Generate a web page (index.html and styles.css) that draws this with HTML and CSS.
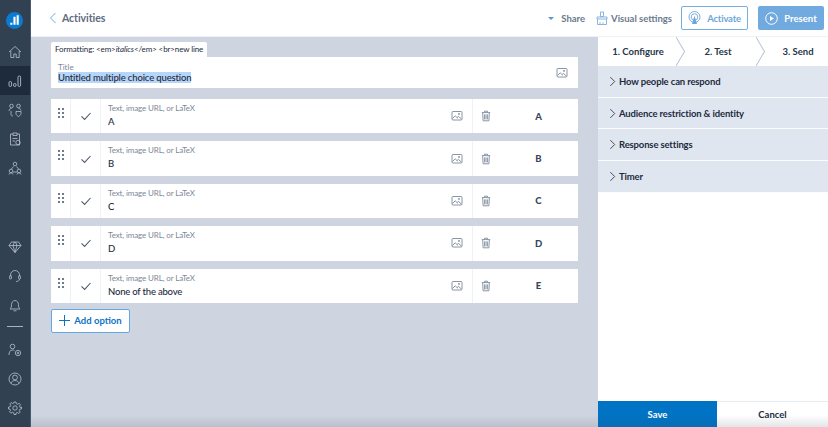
FILE: index.html
```html
<!DOCTYPE html>
<html lang="en">
<head>
<meta charset="utf-8">
<title>Activities</title>
<link rel="stylesheet" href="styles.css">
</head>
<body>
<svg class="defs" width="0" height="0" aria-hidden="true">
  <symbol id="i-image" viewBox="0 0 12 12"><rect x="1" y="1.5" width="10" height="8.5" rx="1" fill="none" stroke="currentColor" stroke-width=".9"/><path d="M1.5 8.5 4.2 5.8 6.6 8.2M6 7.6l1.4-1.2 3 2.6" fill="none" stroke="currentColor" stroke-width=".9"/><circle cx="8" cy="3.9" r=".9" fill="currentColor"/></symbol>
  <symbol id="i-trash" viewBox="0 0 12 12"><path d="M1.8 2.6h8.4M4.5 2.4V1.2h3v1.2M2.7 2.8l.4 8h5.8l.4-8M4.6 4.4v5M6 4.4v5M7.4 4.4v5" fill="none" stroke="currentColor" stroke-width=".9"/></symbol>
  <symbol id="i-check" viewBox="0 0 12 12"><path d="M1.5 6.4 4.6 9.4 10.5 3" fill="none" stroke="currentColor" stroke-width="1.1"/></symbol>
  <symbol id="i-drag" viewBox="0 0 8 12"><g fill="currentColor"><rect x="1" y="1" width="2" height="2"/><rect x="5" y="1" width="2" height="2"/><rect x="1" y="5" width="2" height="2"/><rect x="5" y="5" width="2" height="2"/><rect x="1" y="9" width="2" height="2"/><rect x="5" y="9" width="2" height="2"/></g></symbol>
  <symbol id="i-chev" viewBox="0 0 8 12"><path d="M1.5 1 6.5 6 1.5 11" fill="none" stroke="currentColor" stroke-width="1"/></symbol>
</svg>
<div class="app">
  <nav class="rail">
    <div class="rail-logo">
      <svg width="17" height="17" viewBox="0 0 16 16"><circle cx="8" cy="8" r="8" fill="#0a7bd0"/><path d="M4 10h2v2H4zM7 4.500h2V12H7zM10 3h2v9h-2z" fill="#fff"/></svg>
    </div>
    <a class="rail-item"><svg width="14" height="14" viewBox="0 0 14 14"><path d="M1 7 7 1.500 13 7M2.800 6v6.500h3V9h2.400v3.500h3V6" fill="none" stroke="currentColor" stroke-width=".8"/></svg></a>
    <a class="rail-item active"><svg width="14" height="14" viewBox="0 0 14 14"><g fill="none" stroke="currentColor" stroke-width=".9"><rect x="1" y="7.500" width="2.600" height="5" rx="1.300"/><rect x="5.500" y="9.500" width="2.600" height="3" rx="1.300"/><rect x="10" y="2" width="2.600" height="10.500" rx="1.300"/></g></svg></a>
    <a class="rail-item"><svg width="14" height="14" viewBox="0 0 14 14"><g fill="none" stroke="currentColor" stroke-width=".8"><circle cx="3.500" cy="3" r="1.800"/><circle cx="10.500" cy="3" r="1.800"/><path d="M1 8c0-1.500 1-2.500 2.500-2.500M13 7.500c0-1-1-2-2.500-2M3 8v3.500c0 1 1 1.500 2 1.500M8 8.500h5v2c0 1.500-1.500 2.500-2.500 3-1-.5-2.500-1.500-2.500-3z"/></g></svg></a>
    <a class="rail-item"><svg width="14" height="14" viewBox="0 0 14 14"><g fill="none" stroke="currentColor" stroke-width=".8"><path d="M5 2H2.500v11h9V2H9M5 1h4v2.500H5zM4.500 6.500h5M4.500 9h2.500"/><circle cx="10" cy="10.500" r="2.200"/></g></svg></a>
    <a class="rail-item"><svg width="14" height="14" viewBox="0 0 14 14"><g fill="none" stroke="currentColor" stroke-width=".8"><circle cx="7" cy="3" r="1.800"/><circle cx="3" cy="10" r="1.800"/><circle cx="11" cy="10" r="1.800"/><path d="M5.500 5.500 3.500 8M8.500 5.500l2 2.500M5 11h4M1 13.500c0-1 1-1.500 2-1.500s2 .5 2 1.500M9 13.500c0-1 1-1.500 2-1.500s2 .5 2 1.500"/></g></svg></a>
    <div class="rail-space"></div>
    <a class="rail-item"><svg width="14" height="14" viewBox="0 0 14 14"><path d="M3.500 2h7L13 5.500 7 12.500 1 5.500zM1 5.500h12M5 5.500 7 12.500 9 5.500 7.500 2M5 5.500 6.500 2" fill="none" stroke="currentColor" stroke-width=".8"/></svg></a>
    <a class="rail-item"><svg width="14" height="14" viewBox="0 0 14 14"><g fill="none" stroke="currentColor" stroke-width=".8"><path d="M2.500 7.500V6a4.500 4.500 0 0 1 9 0v1.500M11.500 10c0 1.500-1.500 2.500-3.500 2.500"/><rect x="1.500" y="6.500" width="2" height="3.500" rx="1"/><rect x="10.500" y="6.500" width="2" height="3.500" rx="1"/></g></svg></a>
    <a class="rail-item"><svg width="14" height="14" viewBox="0 0 14 14"><path d="M2 11h10c-1.200-1-1.500-2-1.500-4.500 0-2-1.500-4-3.500-4s-3.500 2-3.500 4C3.500 9 3.200 10 2 11zM5.500 12.800h3" fill="none" stroke="currentColor" stroke-width=".8"/></svg></a>
    <div class="rail-rule"></div>
    <a class="rail-item"><svg width="14" height="14" viewBox="0 0 14 14"><g fill="none" stroke="currentColor" stroke-width=".8"><circle cx="4.500" cy="3.500" r="2.300"/><path d="M1 12c0-3 1-5 3.500-5 1 0 1.500.2 2 .6"/><circle cx="10" cy="10" r="2.700"/><path d="M8.700 10h2.600M10 8.700v2.600"/></g></svg></a>
    <a class="rail-item"><svg width="14" height="14" viewBox="0 0 14 14"><g fill="none" stroke="currentColor" stroke-width=".8"><circle cx="7" cy="7" r="6"/><circle cx="7" cy="5.500" r="2.400"/><path d="M3 11.500c.5-2 2-3 4-3s3.500 1 4 3"/></g></svg></a>
    <a class="rail-item"><svg width="14" height="14" viewBox="0 0 14 14"><g fill="none" stroke="currentColor" stroke-width=".8"><circle cx="7" cy="7" r="2.200"/><path d="M6 1h2l.3 1.700 1.400.6 1.400-1 1.400 1.400-1 1.400.6 1.400L13.500 6v2l-1.700.3-.6 1.400 1 1.400-1.400 1.400-1.400-1-1.400.6L8 13.500H6l-.3-1.700-1.400-.6-1.400 1-1.400-1.400 1-1.400-.6-1.400L.5 8V6l1.700-.3.6-1.400-1-1.400 1.400-1.400 1.400 1 1.400-.6z"/></g></svg></a>
  </nav>

  <div class="content">
    <header class="topbar">
      <a class="back">
        <svg width="8" height="12" viewBox="0 0 8 12"><path d="M6.500 1 1.500 6 6.500 11" fill="none" stroke="currentColor" stroke-width="1"/></svg>
        <span>Activities</span>
      </a>
      <div class="top-actions">
        <a class="share"><span class="caret"></span>Share</a>
        <a class="visual">
          <svg width="14" height="15" viewBox="0 0 14 15"><path d="M5.500 1h3v4.500h-3zM2 6h10v2H2zM2.500 8v5.500h9V8M5 13.500v-2.500M8 13.500v-2" fill="none" stroke="currentColor" stroke-width=".9"/></svg>
          Visual settings
        </a>
        <button class="btn-activate">
          <svg width="13" height="14" viewBox="0 0 13 14"><g fill="none" stroke="currentColor" stroke-width=".9"><circle cx="6.500" cy="6" r="5.500"/><circle cx="6.500" cy="6" r="3.300"/></g><path d="M6.500 4.500 9 13H4z" fill="currentColor"/></svg>
          Activate
        </button>
        <button class="btn-present">
          <svg width="13" height="13" viewBox="0 0 13 13"><circle cx="6.500" cy="6.500" r="5.800" fill="none" stroke="currentColor"/><path d="M5 4v5l4-2.500z" fill="currentColor"/></svg>
          Present
        </button>
      </div>
    </header>

    <div class="workspace">
      <main class="editor">
        <div class="hint">Formatting: &lt;em&gt;<em>italics</em>&lt;/em&gt; &lt;br&gt;new line</div>
        <section class="title-card">
          <div class="title-text">
            <label>Title</label>
            <div class="title-value"><span class="selected">Untitled multiple choice question</span></div>
          </div>
          <svg class="ico img"><use href="#i-image"/></svg>
        </section>
        <ul class="options">
          <li class="option">
            <div class="cell-drag"><svg class="drag"><use href="#i-drag"/></svg></div>
            <div class="cell-check"><svg class="check"><use href="#i-check"/></svg></div>
            <div class="cell-text"><label>Text, image URL, or LaTeX</label><div class="value">A</div></div>
            <div class="cell-img"><svg class="ico"><use href="#i-image"/></svg></div>
            <div class="cell-trash"><svg class="ico"><use href="#i-trash"/></svg></div>
            <div class="cell-key">A</div>
          </li>
          <li class="option">
            <div class="cell-drag"><svg class="drag"><use href="#i-drag"/></svg></div>
            <div class="cell-check"><svg class="check"><use href="#i-check"/></svg></div>
            <div class="cell-text"><label>Text, image URL, or LaTeX</label><div class="value">B</div></div>
            <div class="cell-img"><svg class="ico"><use href="#i-image"/></svg></div>
            <div class="cell-trash"><svg class="ico"><use href="#i-trash"/></svg></div>
            <div class="cell-key">B</div>
          </li>
          <li class="option">
            <div class="cell-drag"><svg class="drag"><use href="#i-drag"/></svg></div>
            <div class="cell-check"><svg class="check"><use href="#i-check"/></svg></div>
            <div class="cell-text"><label>Text, image URL, or LaTeX</label><div class="value">C</div></div>
            <div class="cell-img"><svg class="ico"><use href="#i-image"/></svg></div>
            <div class="cell-trash"><svg class="ico"><use href="#i-trash"/></svg></div>
            <div class="cell-key">C</div>
          </li>
          <li class="option">
            <div class="cell-drag"><svg class="drag"><use href="#i-drag"/></svg></div>
            <div class="cell-check"><svg class="check"><use href="#i-check"/></svg></div>
            <div class="cell-text"><label>Text, image URL, or LaTeX</label><div class="value">D</div></div>
            <div class="cell-img"><svg class="ico"><use href="#i-image"/></svg></div>
            <div class="cell-trash"><svg class="ico"><use href="#i-trash"/></svg></div>
            <div class="cell-key">D</div>
          </li>
          <li class="option">
            <div class="cell-drag"><svg class="drag"><use href="#i-drag"/></svg></div>
            <div class="cell-check"><svg class="check"><use href="#i-check"/></svg></div>
            <div class="cell-text"><label>Text, image URL, or LaTeX</label><div class="value">None of the above</div></div>
            <div class="cell-img"><svg class="ico"><use href="#i-image"/></svg></div>
            <div class="cell-trash"><svg class="ico"><use href="#i-trash"/></svg></div>
            <div class="cell-key">E</div>
          </li>
        </ul>
        <button class="add-option">
          <svg width="11" height="11" viewBox="0 0 11 11"><path d="M5.500 0v11M0 5.500h11" stroke="currentColor" stroke-width="1"/></svg>
          Add option
        </button>
      </main>

      <aside class="panel">
        <div class="steps">
          <div class="step">1. Configure<svg class="step-arrow" viewBox="0 0 9 28" preserveAspectRatio="none"><path d="M0 0 8.500 14 0 28" fill="none" stroke="#b9c6d8"/></svg></div>
          <div class="step">2. Test<svg class="step-arrow" viewBox="0 0 9 28" preserveAspectRatio="none"><path d="M0 0 8.500 14 0 28" fill="none" stroke="#b9c6d8"/></svg></div>
          <div class="step">3. Send</div>
        </div>
        <div class="acc"><svg class="chev"><use href="#i-chev"/></svg>How people can respond</div>
        <div class="acc"><svg class="chev"><use href="#i-chev"/></svg>Audience restriction &amp; identity</div>
        <div class="acc"><svg class="chev"><use href="#i-chev"/></svg>Response settings</div>
        <div class="acc"><svg class="chev"><use href="#i-chev"/></svg>Timer</div>
        <div class="panel-space"></div>
        <div class="panel-foot">
          <button class="save">Save</button>
          <button class="cancel">Cancel</button>
        </div>
      </aside>
    </div>
  </div>
  <div class="bottom-fade"></div>
</div>
</body>
</html>
```

FILE: styles.css
```css
* { box-sizing: border-box; }
html, body { margin: 0; height: 100%; }
body { font-family: "Lato", "Noto Sans", sans-serif; color: #1d2b3e; overflow: hidden; }
.defs { position: absolute; }
ul { list-style: none; margin: 0; padding: 0; }
button { font-family: inherit; cursor: pointer; }
label { display: block; }

.app { display: flex; width: 828px; height: 427px; position: relative; overflow: hidden; }

/* Left rail */
.rail { width: 31px; flex: none; background: #324152; border-right: 1px solid #4a5a6e; display: flex; flex-direction: column; color: #b6c0cc; padding-bottom: 5px; }
.rail-logo { height: 37px; padding-top: 12px; padding-left: 6px; }
.rail-item { height: 29px; flex: none; display: flex; align-items: center; justify-content: center; }
.rail-item.active { background: #1e2b3d; }
.rail-space { flex: 1; }
.rail-rule { height: 1px; background: #a8b3c0; margin: 7px 7px 8px; flex: none; }

/* Top bar */
.content { flex: 1; display: flex; flex-direction: column; min-width: 0; }
.topbar { height: 37px; flex: none; background: #fff; display: flex; align-items: center; justify-content: space-between; padding: 0 4px 0 18px; border-bottom: 1px solid #eef1f5; }
.back { display: flex; align-items: center; gap: 5px; color: #5d6b7e; font-size: 10.500px; font-weight: 700; letter-spacing: -.05px; }
.back svg { color: #74a9dc; }
.top-actions { display: flex; align-items: center; font-size: 9.500px; font-weight: 700; color: #6c7a8c; }
.share { display: flex; align-items: center; gap: 7px; margin-right: 10px; }
.caret { width: 0; height: 0; border-left: 3px solid transparent; border-right: 3px solid transparent; border-top: 3.500px solid #5c97d4; }
.visual { display: flex; align-items: center; gap: 2px; margin-right: 9px; }
.visual svg { color: #80addc; }
.btn-activate { width: 67px; height: 24px; background: #fff; border: 1px solid #76aee0; border-radius: 2px; color: #6ea6da; font-size: 9.500px; font-weight: 700; letter-spacing: -.2px; display: flex; align-items: center; justify-content: center; gap: 6px; padding: 0; margin-right: 10px; }
.btn-present { width: 66px; height: 24px; background: #71aadf; border: 0; border-radius: 2px; color: #fff; font-size: 9.500px; font-weight: 700; display: flex; align-items: center; justify-content: center; gap: 6px; padding: 0; }

/* Editor */
.workspace { flex: 1; display: flex; min-height: 0; }
.editor { flex: 1; min-width: 0; background: #ced5e1; padding: 5px 20px 0 20px; }
.hint { width: fit-content; height: 15px; background: #fff; border-radius: 2px 2px 0 0; padding: 0 4px; font-size: 8px; letter-spacing: -.12px; line-height: 15px; color: #1d2b3e; }
.title-card { background: #fff; height: 31px; display: flex; align-items: center; justify-content: space-between; padding: 0 10px 0 7px; }
.title-text label { font-size: 8px; line-height: 10px; color: #7c8896; }
.title-value { font-size: 9.500px; letter-spacing: -.15px; line-height: 12px; color: #1d2b3e; font-weight: 500; }
.selected { background: #b5d5f9; }
.ico { width: 12px; height: 12px; color: #7d8a9b; display: block; }
.options { margin-top: 11px; display: flex; flex-direction: column; gap: 8px; }
.option { height: 34.400px; background: #fff; display: flex; align-items: stretch; }
.cell-drag { width: 20px; border-right: 1px solid #eef1f5; padding: 8px 0 0 6px; }
.drag { width: 8px; height: 12px; color: #6e7b8c; display: block; }
.cell-check { width: 30px; border-right: 1px solid #eef1f5; display: flex; align-items: center; justify-content: center; }
.check { width: 12px; height: 12px; color: #4e5c6f; }
.cell-text { flex: 1; padding: 4px 0 0 7px; }
.cell-text label { font-size: 8px; letter-spacing: -.12px; line-height: 10px; color: #7c8896; }
.value { font-size: 9.500px; letter-spacing: -.2px; line-height: 12px; margin-top: 3px; font-weight: 500; }
.cell-img { width: 12px; display: flex; align-items: center; margin-right: 9px; }
.cell-trash { width: 44px; border-left: 1px solid #eef1f5; display: flex; align-items: center; padding-left: 7px; }
.cell-key { width: 62px; padding-right: 17px; display: flex; align-items: center; justify-content: center; font-size: 9.500px; font-weight: 900; color: #37465a; }
.add-option { margin-top: 6px; width: 79px; height: 24px; background: #fff; border: 1px solid #63aae4; border-radius: 2px; color: #0b74c4; font-size: 9.500px; font-weight: 700; display: flex; align-items: center; justify-content: center; gap: 4px; padding: 0; }

/* Right panel */
.panel { width: 230px; flex: none; background: #fff; display: flex; flex-direction: column; overflow: hidden; }
.steps { height: 29px; flex: none; display: flex; font-size: 9.500px; font-weight: 700; background: #fff; }
.step { position: relative; width: 80px; flex: none; display: flex; align-items: center; justify-content: center; color: #27364a; }
.step-arrow { position: absolute; right: -7px; top: 0; width: 9px; height: 29px; }
.acc { height: 31.700px; flex: none; background: #e0e6ef; border-bottom: 1px solid #fbfcfe; display: flex; align-items: center; padding-left: 11px; gap: 3px; font-size: 9.500px; letter-spacing: -.15px; font-weight: 700; color: #1d2b3e; }
.chev { width: 7px; height: 11px; color: #2a394d; }
.panel-space { flex: 1; }
.panel-foot { height: 26px; flex: none; display: flex; }
.save, .cancel { border: 0; font-size: 9.500px; font-weight: 700; padding: 0; }
.save { width: 119px; background: #0073c4; color: #fff; }
.cancel { flex: 1; background: #fff; color: #1d2b3e; border-top: 1px solid #e8edf3; }

.bottom-fade { position: absolute; left: 31px; right: 0; bottom: 0; height: 12px; background: linear-gradient(to bottom, rgba(60,70,85,0), rgba(60,70,85,.14)); pointer-events: none; }
```
